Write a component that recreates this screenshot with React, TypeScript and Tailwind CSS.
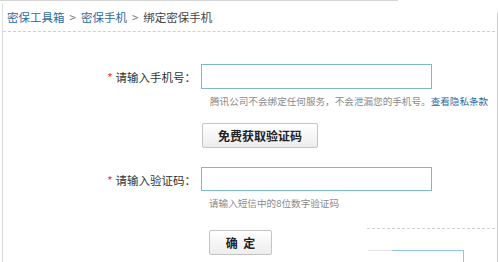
export default function App() {
  const font = { fontFamily: '"Noto Sans CJK SC", "Noto Sans", sans-serif' };
  return (
    <div className="relative h-[262px] w-[499px] overflow-hidden bg-white" style={font}>
      <div className="h-px w-[398px] bg-[#d4d4d4]" />
      <div className="ml-[2px] mt-[3px] h-[258px] w-[496px] border-l border-[#dcdcdc]">
        <div className="flex h-[27px] items-center pl-[4px] text-[11.5px] leading-none">
          <a className="text-[#2d6a9f]">密保工具箱</a>
          <span className="mx-[5px] text-[#777]">&gt;</span>
          <a className="text-[#2d6a9f]">密保手机</a>
          <span className="mx-[5px] text-[#777]">&gt;</span>
          <span className="text-[#444]">绑定密保手机</span>
        </div>
        <div className="mr-[3px] border-b border-dashed border-[#cfcfcf]" />

        <div className="mt-[32px] flex">
          <div className="flex h-[25px] w-[193px] shrink-0 items-center justify-end pt-[3px] text-[11.5px] leading-none text-[#333]">
            <span className="mr-[3px] text-[#e53333]">*</span>
            <span>请输入手机号：</span>
          </div>
          <div className="ml-[5px] flex shrink-0 flex-col">
            <input className="h-[25px] w-[231px] border border-[#7fb8cc] px-1 text-[12px] outline-none" />
            <div className="mt-[6px] ml-[9px] flex whitespace-nowrap text-[9.6px] leading-[13px] text-[#8a8a8a]">
              <span>腾讯公司不会绑定任何服务，不会泄漏您的手机号。</span>
              <a className="text-[#2d6a9f]">查看隐私条款</a>
            </div>
            <button className="mt-[15px] ml-px flex h-[25px] w-[116px] items-center justify-center rounded-[2px] border border-[#c4c4c4] bg-gradient-to-b from-white to-[#ededed] text-[12px] font-bold leading-none text-[#222]">
              免费获取验证码
            </button>
          </div>
        </div>

        <div className="mt-[19px] flex">
          <div className="flex h-[24px] w-[193px] shrink-0 items-center justify-end pt-[4px] text-[11.5px] leading-none text-[#333]">
            <span className="mr-[3px] text-[#e53333]">*</span>
            <span>请输入验证码：</span>
          </div>
          <div className="ml-[5px] flex shrink-0 flex-col">
            <input className="h-[24px] w-[231px] border border-[#7fb8cc] px-1 text-[12px] outline-none" />
            <div className="mt-[6px] ml-[8px] whitespace-nowrap text-[9.6px] leading-[13px] text-[#8a8a8a]">
              请输入短信中的8位数字验证码
            </div>
            <button className="mt-[20px] ml-[8px] flex h-[25px] w-[63px] items-center justify-center rounded-[2px] border border-[#c4c4c4] bg-gradient-to-b from-white to-[#ededed] text-[12px] font-bold leading-none text-[#222]">
              确&nbsp;&nbsp;定
            </button>
          </div>
        </div>
      </div>

      <div className="absolute left-[497px] top-[13px] h-[249px] w-px bg-[#cfcfcf]" />
      <div className="absolute left-[367px] top-[228px] w-[128px] border-t border-dashed border-[#d0d0d0]" />
      <div className="absolute left-[368px] top-[250px] h-[12px] w-[96px] border-r border-t border-[#8fc6d8]">
        <div className="-mt-px h-px w-[24px] bg-[#e4e4e4]" />
      </div>
    </div>
  );
}
